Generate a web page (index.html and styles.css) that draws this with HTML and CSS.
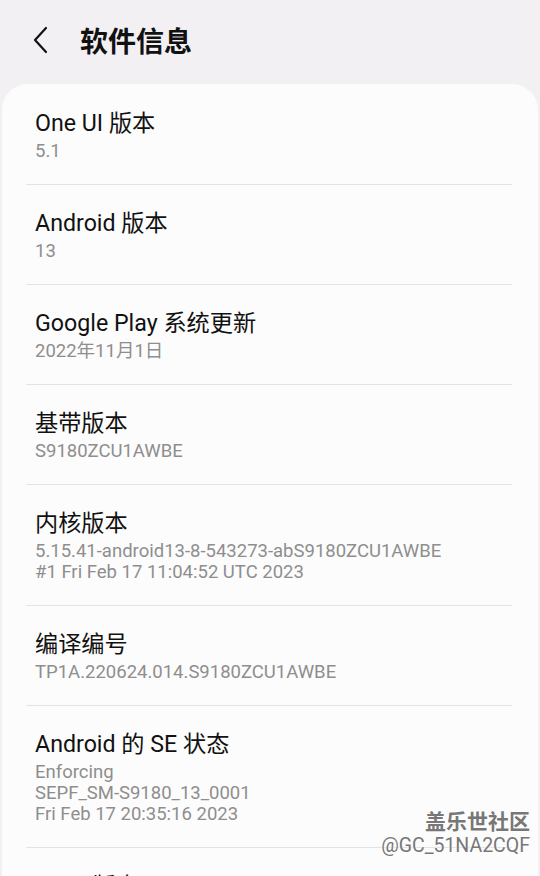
FILE: index.html
```html
<!DOCTYPE html>
<html lang="zh-CN">
<head>
  <meta charset="UTF-8" />
  <meta name="viewport" content="width=device-width, initial-scale=1.0"/>
  <title>软件信息</title>
  <link rel="stylesheet" href="styles.css">
</head>
<body>
  <div class="header">
    <svg class="back" width="24" height="30" viewBox="0 0 24 30">
      <path d="M15 3 L4 15 L15 27" fill="none" stroke="#111" stroke-width="2.2" stroke-linecap="round" stroke-linejoin="round"/>
    </svg>
    <h1>软件信息</h1>
  </div>

  <div class="card">
    <div class="item">
      <div class="title">One UI 版本</div>
      <div class="sub">5.1</div>
    </div>
    <div class="item">
      <div class="title">Android 版本</div>
      <div class="sub">13</div>
    </div>
    <div class="item">
      <div class="title">Google Play 系统更新</div>
      <div class="sub">2022年11月1日</div>
    </div>
    <div class="item">
      <div class="title">基带版本</div>
      <div class="sub">S9180ZCU1AWBE</div>
    </div>
    <div class="item">
      <div class="title">内核版本</div>
      <div class="sub">5.15.41-android13-8-543273-abS9180ZCU1AWBE<br>#1 Fri Feb 17 11:04:52 UTC 2023</div>
    </div>
    <div class="item">
      <div class="title">编译编号</div>
      <div class="sub">TP1A.220624.014.S9180ZCU1AWBE</div>
    </div>
    <div class="item">
      <div class="title">Android 的 SE 状态</div>
      <div class="sub">Enforcing<br>SEPF_SM-S9180_13_0001<br>Fri Feb 17 20:35:16 2023</div>
    </div>
    <div class="item">
      <div class="title">Knox 版本</div>
      <div class="sub">Knox 3.9</div>
    </div>
  </div>

  <div class="watermark">
    <div class="wm-name">盖乐世社区</div>
    <div class="wm-user">@GC_51NA2CQF</div>
  </div>
</body>
</html>
```

FILE: styles.css
```css
html, body {
  margin: 0;
  height: 876px;
  overflow: hidden;
}
body {
  font-family: Roboto, "Noto Sans CJK SC", sans-serif;
  background-color: #f3f0f4;
  position: relative;
}
.header {
  height: 84px;
  display: flex;
  align-items: center;
  padding-left: 31px;
  box-sizing: border-box;
  padding-bottom: 4px;
}
.back {
  display: block;
}
.header h1 {
  margin: 0 0 0 25px;
  font-family: "Noto Sans CJK SC", sans-serif;
  font-size: 28px;
  font-weight: bold;
  color: #111;
}
.card {
  margin: 0 2px;
  background: #fcfcfc;
  border-radius: 26px 26px 0 0;
}
.item {
  padding: 25px 33px 22px;
  position: relative;
}
.item + .item::before {
  content: "";
  position: absolute;
  top: 0;
  left: 24px;
  right: 26px;
  height: 1px;
  background: #e3e3e3;
}
.title {
  font-size: 23.2px;
  line-height: 28px;
  color: #111;
}
.sub {
  margin-top: 4px;
  font-size: 18.5px;
  line-height: 21px;
  color: #8e8e8e;
}
.watermark {
  position: absolute;
  right: 10px;
  top: 806px;
  text-align: right;
  color: #777;
  text-shadow: 0 0 2px #fff, 0 0 2px #fff;
}
.wm-name {
  font-family: "Noto Sans CJK SC", sans-serif;
  font-size: 21px;
  font-weight: bold;
  line-height: 28px;
}
.wm-user {
  font-size: 19.5px;
  line-height: 24px;
}
```
